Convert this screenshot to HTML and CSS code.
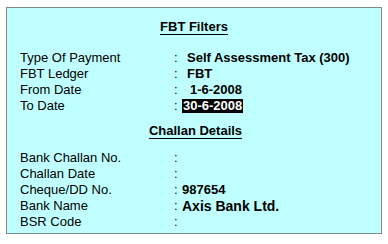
FILE: index.html
```html
<!DOCTYPE html>
<html>
<head>
<meta charset="utf-8">
<link rel="stylesheet" href="styles.css">
</head>
<body>
<div class="panel">
  <div class="title title-fbt"><span>FBT Filters</span></div>
  <div class="rows rows-fbt">
    <div class="label">Type Of Payment</div><div class="colon">:</div><div class="value pad">Self Assessment Tax (300)</div>
    <div class="label">FBT Ledger</div><div class="colon">:</div><div class="value pad">FBT</div>
    <div class="label">From Date</div><div class="colon">:</div><div class="value"><span class="date">1-6-2008</span></div>
    <div class="label">To Date</div><div class="colon">:</div><div class="value"><span class="date active">30-6-2008</span></div>
  </div>
  <div class="title title-challan"><span>Challan Details</span></div>
  <div class="rows rows-challan">
    <div class="label">Bank Challan No.</div><div class="colon">:</div><div class="value"></div>
    <div class="label">Challan Date</div><div class="colon">:</div><div class="value"></div>
    <div class="label">Cheque/DD No.</div><div class="colon">:</div><div class="value">987654</div>
    <div class="label">Bank Name</div><div class="colon">:</div><div class="value big">Axis Bank Ltd.</div>
    <div class="label">BSR Code</div><div class="colon">:</div><div class="value"></div>
  </div>
</div>
</body>
</html>
```

FILE: styles.css
```css
html, body {
  margin: 0;
  padding: 0;
  background: #ffffff;
}
body {
  font-family: "Liberation Sans", Arial, sans-serif;
  font-size: 13px;
  color: #000;
}
.panel {
  margin: 7px 0 0 6px;
  width: 374px;
  height: 225px;
  border: 1px solid #7d8b8b;
  background: #c0ffff;
  box-sizing: content-box;
}
.title {
  text-align: center;
  font-weight: bold;
  line-height: 16px;
  height: 16px;
}
.title span {
  text-decoration: underline;
  text-underline-offset: 3px;
}
.title-fbt {
  margin-top: 11px;
}
.title-challan {
  margin-top: 9px;
  padding-left: 3px;
}
.rows {
  display: grid;
  grid-template-columns: 154px 8px 1fr;
  grid-auto-rows: 16px;
  line-height: 16px;
  padding-left: 13px;
}
.rows-fbt {
  margin-top: 15px;
}
.rows-challan {
  margin-top: 11px;
}
.colon {
  padding-left: 0;
}
.value {
  font-weight: bold;
  white-space: nowrap;
}
.value.pad {
  padding-left: 5px;
}
.value.big {
  font-size: 14px;
}
.date {
  display: inline-block;
  width: 59px;
  text-align: right;
  padding: 0 1px;
  line-height: 14px;
}
.date.active {
  background: #000;
  color: #fff;
}
```
